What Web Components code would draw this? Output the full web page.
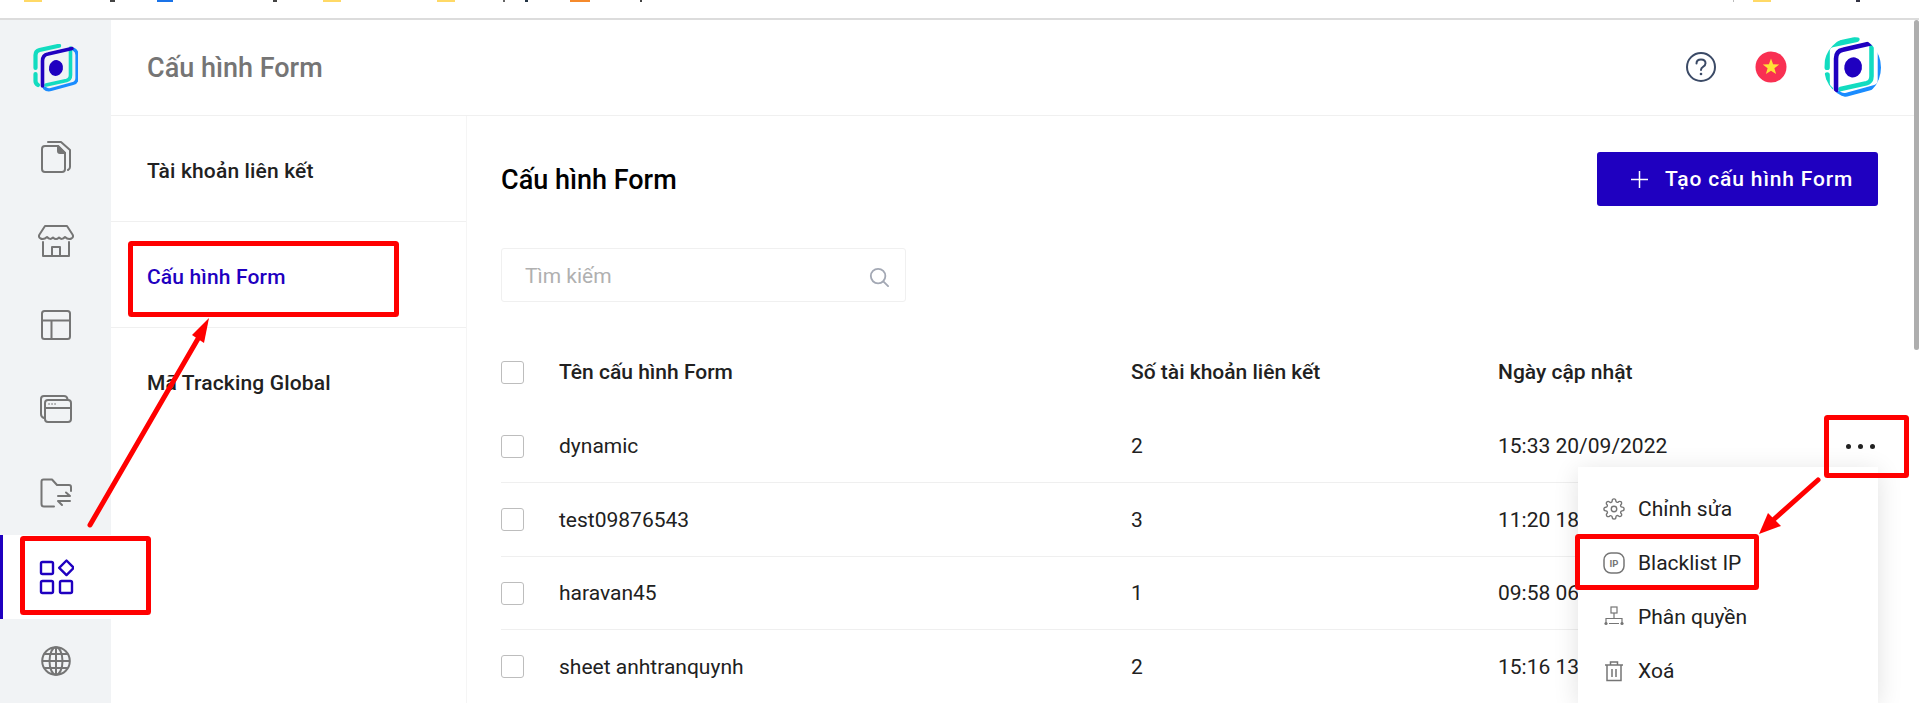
<!DOCTYPE html>
<html lang="vi">
<head>
<meta charset="utf-8">
<title>Cấu hình Form</title>
<style>
  html, body { margin: 0; padding: 0; background: #fff; }
  body { width: 1919px; height: 703px; overflow: hidden; position: relative; font-family: Roboto, "Liberation Sans", sans-serif; }
</style>
</head>
<body>
<browser-strip></browser-strip>
<app-shell>
  <app-rail slot="rail">
    <brand-logo size="45"></brand-logo>
    <rail-item icon="docs"></rail-item>
    <rail-item icon="store"></rail-item>
    <rail-item icon="layout"></rail-item>
    <rail-item icon="window"></rail-item>
    <rail-item icon="folder"></rail-item>
    <rail-item icon="apps" active></rail-item>
    <rail-item icon="globe"></rail-item>
  </app-rail>
  <page-header slot="header" title-text="Cấu hình Form"></page-header>
  <sub-nav slot="nav">
    <sub-nav-item>Tài khoản liên kết</sub-nav-item>
    <sub-nav-item active>Cấu hình Form</sub-nav-item>
    <sub-nav-item>Mã Tracking Global</sub-nav-item>
  </sub-nav>
  <form-panel slot="main">
    <form-row head name="Tên cấu hình Form" count="Số tài khoản liên kết" date="Ngày cập nhật"></form-row>
    <form-row name="dynamic" count="2" date="15:33 20/09/2022" more></form-row>
    <form-row name="test09876543" count="3" date="11:20 18/09/2022"></form-row>
    <form-row name="haravan45" count="1" date="09:58 06/09/2022"></form-row>
    <form-row name="sheet anhtranquynh" count="2" date="15:16 13/08/2022"></form-row>
    <action-menu slot="overlay">
      <menu-row icon="gear">Chỉnh sửa</menu-row>
      <menu-row icon="ip">Blacklist IP</menu-row>
      <menu-row icon="org">Phân quyền</menu-row>
      <menu-row icon="trash">Xoá</menu-row>
    </action-menu>
  </form-panel>
</app-shell>
<page-scrollbar></page-scrollbar>
<red-marks></red-marks>

<script>
const BLUE = '#1f00c0';
const GREY = '#757575';

const RAIL_ICONS = {
  docs: `<svg width="30" height="32" viewBox="0 0 30 32" fill="none" stroke="${GREY}" stroke-width="2" stroke-linejoin="round" stroke-linecap="round">
    <path d="M4 5H17L24 12V28Q24 31 21 31H4Q1 31 1 28V8Q1 5 4 5Z"/>
    <path d="M17 5V10Q17 12 19 12H24Z" fill="${GREY}"/>
    <path d="M7 1H20L29 9V26Q29 28 27 29"/></svg>`,
  store: `<svg width="36" height="32" viewBox="0 0 36 32" fill="none" stroke="${GREY}" stroke-width="2" stroke-linejoin="round" stroke-linecap="round">
    <path d="M7 1H29L34.500 9.500Q36 12 33.500 13.500Q30 15 27 12Q24 15.500 21 12.500Q18 15.500 15 12.500Q12 15.500 9 12Q6 15 2.500 13.500Q0 12 1.500 9.500Z"/>
    <path d="M5 17V31H31V17"/><path d="M14 31V22H22V31"/></svg>`,
  layout: `<svg width="30" height="30" viewBox="0 0 30 30" fill="none" stroke="${GREY}" stroke-width="2" stroke-linejoin="round">
    <rect x="1" y="1" width="28" height="28" rx="2.500"/><path d="M1 10.500H29M10.500 10.500V29"/></svg>`,
  window: `<svg width="32" height="28" viewBox="0 0 32 28" fill="none" stroke="${GREY}" stroke-width="2" stroke-linejoin="round" stroke-linecap="round">
    <path d="M4 23Q1 22 1 19V4Q1 1 4 1H24Q27 1 27.500 4"/>
    <rect x="5" y="5" width="26" height="22" rx="3"/><path d="M5 13H31"/>
    <path d="M9 9H9.100M12 9H12.100M15 9H15.100" stroke-width="1.600"/></svg>`,
  folder: `<svg width="32" height="30" viewBox="0 0 32 30" fill="none" stroke="${GREY}" stroke-width="2" stroke-linejoin="round" stroke-linecap="round">
    <path d="M14 28.500H4Q1.500 28.500 1.500 26V3.500Q1.500 1.500 3.500 1.500H12L17 7H29Q31 7 31 9V13"/>
    <path d="M18 18H30L26 14.500M30 23H18L22 27"/></svg>`,
  apps: `<svg width="36" height="36" viewBox="-2 0 36 36" fill="none" stroke="${BLUE}" stroke-width="2.400" stroke-linejoin="round">
    <rect x="1" y="3" width="12" height="12" rx="1.500"/><rect x="1" y="22" width="12" height="12" rx="1.500"/>
    <rect x="20" y="22" width="12" height="12" rx="1.500"/>
    <path d="M26.500 1.500L33.800 8.800L26.500 16.100L19.200 8.800Z"/></svg>`,
  globe: `<svg width="30" height="30" viewBox="0 0 30 30" fill="none" stroke="${GREY}" stroke-width="2">
    <circle cx="15" cy="15" r="13.800"/><ellipse cx="15" cy="15" rx="6.500" ry="13.800"/>
    <path d="M15 1V29M1.200 15H28.800M3.500 8H26.500M3.500 22H26.500"/></svg>`
};

const MENU_ICONS = {
  gear: `<svg width="22" height="22" viewBox="0 0 24 24" fill="none" stroke="${GREY}" stroke-width="1.500" stroke-linejoin="round">
    <circle cx="12" cy="12" r="3"/>
    <path d="M19.400 15a1.650 1.650 0 0 0 .33 1.820l.06.06a2 2 0 0 1 0 2.830 2 2 0 0 1-2.830 0l-.06-.06a1.650 1.650 0 0 0-1.820-.33 1.650 1.650 0 0 0-1 1.510V21a2 2 0 0 1-2 2 2 2 0 0 1-2-2v-.09A1.650 1.650 0 0 0 9 19.400a1.650 1.650 0 0 0-1.820.33l-.06.06a2 2 0 0 1-2.830 0 2 2 0 0 1 0-2.830l.06-.06a1.650 1.650 0 0 0 .33-1.820 1.650 1.650 0 0 0-1.510-1H3a2 2 0 0 1-2-2 2 2 0 0 1 2-2h.09A1.650 1.650 0 0 0 4.600 9a1.650 1.650 0 0 0-.33-1.820l-.06-.06a2 2 0 0 1 0-2.830 2 2 0 0 1 2.830 0l.06.06a1.650 1.650 0 0 0 1.820.33H9a1.650 1.650 0 0 0 1-1.510V3a2 2 0 0 1 2-2 2 2 0 0 1 2 2v.09a1.650 1.650 0 0 0 1 1.510 1.650 1.650 0 0 0 1.820-.33l.06-.06a2 2 0 0 1 2.830 0 2 2 0 0 1 0 2.830l-.06.06a1.650 1.650 0 0 0-.33 1.820V9a1.650 1.650 0 0 0 1.510 1H21a2 2 0 0 1 2 2 2 2 0 0 1-2 2h-.09a1.650 1.650 0 0 0-1.510 1z"/></svg>`,
  ip: `<svg width="22" height="22" viewBox="0 0 22 22" fill="none" stroke="${GREY}" stroke-width="1.500">
    <rect x="1" y="1" width="20" height="20" rx="7"/>
    <text x="11" y="14.500" text-anchor="middle" font-family="Roboto, sans-serif" font-size="9.500" font-weight="700" fill="${GREY}" stroke="none">IP</text></svg>`,
  org: `<svg width="22" height="22" viewBox="0 0 22 22" fill="none" stroke="${GREY}" stroke-width="1.200">
    <rect x="8" y="1" width="6" height="6"/><path d="M11 7V12.500M3 17V12.500H19V17M6 17.500H16"/>
    <circle cx="3" cy="17.500" r="1.600" fill="${GREY}" stroke="none"/><circle cx="19" cy="17.500" r="1.600" fill="${GREY}" stroke="none"/></svg>`,
  trash: `<svg width="22" height="22" viewBox="0 0 22 22" fill="none" stroke="${GREY}" stroke-width="1.500">
    <path d="M2 5H20M7.500 5V2H14.500V5M4 5V20.500H18V5M9 9V17M13 9V17"/></svg>`
};

function shadow(el, html) {
  el.attachShadow({ mode: 'open' }).innerHTML = html;
}

class BrowserStrip extends HTMLElement {
  constructor() {
    super();
    // leftovers of the bookmark bar that the crop cut off: [gap before, width, colour]
    const bits = [[24, 18, '#ffd966'], [68, 5, '#444'], [42, 16, '#1a73e8'], [100, 4, '#444'], [46, 18, '#ffd966'],
      [96, 18, '#ffd966'], [48, 2, '#666'], [20, 3, '#234'], [42, 20, '#f58a2c'], [50, 2, '#444'], [1091, 1, '#bbb'], [19, 18, '#ffd966'], [85, 4, '#334']];
    shadow(this, `<style>
      :host { display: block; height: 18px; border-bottom: 2px solid #dcdcdc; background: #fff; }
      .bits { display: flex; align-items: flex-start; }
      i { display: block; height: 2px; }
    </style><div class="bits">${bits.map(b => `<i style="margin-left:${b[0]}px;width:${b[1]}px;background:${b[2]}"></i>`).join('')}</div>`);
  }
}

class AppShell extends HTMLElement {
  constructor() {
    super();
    shadow(this, `<style>
      :host { display: flex; height: 683px; overflow: hidden; }
      .right { flex: 1; display: flex; flex-direction: column; min-width: 0; }
      .body { flex: 1; display: flex; min-height: 0; }
    </style>
    <slot name="rail"></slot>
    <div class="right">
      <slot name="header"></slot>
      <div class="body"><slot name="nav"></slot><slot name="main"></slot></div>
    </div>`);
  }
}

class AppRail extends HTMLElement {
  constructor() {
    super();
    shadow(this, `<style>
      :host { display: flex; flex-direction: column; width: 111px; flex: none; background: #f1f3f5; }
      .logo { height: 96px; display: flex; align-items: center; justify-content: center; }
      .items { display: flex; flex-direction: column; }
    </style><div class="logo"><slot name="logo"></slot></div><div class="items"><slot></slot></div>`);
  }
  connectedCallback() {
    const logo = this.querySelector('brand-logo');
    if (logo) logo.slot = 'logo';
  }
}

class BrandLogo extends HTMLElement {
  constructor() {
    super();
    const size = Number(this.getAttribute('size') || 45);
    shadow(this, `<style>
      :host { display: block; line-height: 0; }
      :host([round]) { border-radius: 50%; overflow: hidden; }
    </style>
    <svg width="${size}" height="${size * 48 / 45}" viewBox="0 0 45 48" fill="none" stroke-linecap="round">
      <path d="M41 5.500Q44 7 44 11V34Q44 38.500 40 39.500L18 45.500Q14 46.500 11.500 44" stroke="#1a8cff" stroke-width="3.200"/>
      <path d="M37.500 4V31Q37.500 35.500 33.500 36.500L13 41" stroke="#12dcc0" stroke-width="3.600"/>
      <path d="M2.500 24V11Q2.500 7 6.500 6L26 1.800" stroke="#12dcc0" stroke-width="4.200"/>
      <path d="M2.500 30V37Q2.500 39.500 5 41" stroke="#12dcc0" stroke-width="4.200"/>
      <path d="M9.500 42V17Q9.500 11 15 10L39 4.500" stroke="${BLUE}" stroke-width="3.600"/>
      <ellipse cx="23" cy="24" rx="7" ry="8" transform="rotate(12 23 24)" fill="${BLUE}"/>
    </svg>`);
  }
}

class RailItem extends HTMLElement {
  constructor() {
    super();
    shadow(this, `<style>
      :host { display: flex; align-items: center; justify-content: center; height: 84px; }
      :host([active]) { background: #fff; box-shadow: inset 3px 0 0 ${BLUE}; }
      svg { display: block; }
    </style>${RAIL_ICONS[this.getAttribute('icon')]}`);
  }
}

class PageHeader extends HTMLElement {
  constructor() {
    super();
    shadow(this, `<style>
      :host { display: flex; align-items: center; height: 95px; flex: none; padding: 0 38px 0 36px; border-bottom: 1px solid #f0f0f0; }
      h1 { flex: 1; margin: 0; font: 500 27px Roboto, sans-serif; color: ${GREY}; }
      .tools { display: flex; align-items: center; }
      svg { display: block; }
      .help { margin-right: 39px; }
      .flag { margin-right: 37px; }
    </style>
    <h1>${this.getAttribute('title-text')}</h1>
    <div class="tools">
      <svg class="help" width="30" height="30" viewBox="0 0 30 30" fill="none" stroke="#3b4a66" stroke-width="2" stroke-linecap="round">
        <circle cx="15" cy="15" r="14"/>
        <path d="M10.500 11.500Q10.500 7.500 15 7.500Q19.500 7.500 19.500 11.300Q19.500 13.500 17 14.800Q15 15.800 15 18"/>
        <circle cx="15" cy="22" r="1.300" fill="#3b4a66" stroke="none"/>
      </svg>
      <svg class="flag" width="32" height="32" viewBox="0 0 32 32">
        <circle cx="16" cy="16" r="15.500" fill="#f93052"/>
        <polygon points="16,7.500 18.100,13.200 24.200,13.400 19.400,17.200 21.100,23 16,19.700 10.900,23 12.600,17.200 7.800,13.400 13.900,13.200" fill="#ffe135"/>
      </svg>
      <brand-logo size="57" round></brand-logo>
    </div>`);
  }
}

class SubNav extends HTMLElement {
  constructor() {
    super();
    shadow(this, `<style>
      :host { display: flex; flex-direction: column; flex: none; width: 355px; border-right: 1px solid #f5f5f5; }
    </style><slot></slot>`);
  }
}

class SubNavItem extends HTMLElement {
  constructor() {
    super();
    shadow(this, `<style>
      :host { display: flex; align-items: center; height: 106px; padding: 4px 0 0 36px; border-bottom: 1px solid #f0f0f0;
        font: 500 21px Roboto, sans-serif; letter-spacing: .15px; color: #212121; box-sizing: border-box; }
      :host(:last-child) { border-bottom: 0; }
      :host([active]) { color: ${BLUE}; }
    </style><slot></slot>`);
  }
}

class FormPanel extends HTMLElement {
  constructor() {
    super();
    shadow(this, `<style>
      :host { display: block; flex: 1; min-width: 0; position: relative; padding: 36px 41px 0 34px; }
      .top { display: flex; align-items: center; justify-content: space-between; }
      h2 { margin: 0; padding-top: 2px; font: 500 27px Roboto, sans-serif; color: #000; }
      button { display: flex; align-items: center; width: 281px; height: 54px; padding: 0 0 0 34px; border: 0; border-radius: 3px;
        background: ${BLUE}; color: #fff; font: 500 21px Roboto, sans-serif; letter-spacing: .85px; box-sizing: border-box; }
      button svg { margin-right: 17px; flex: none; }
      .search { display: flex; align-items: center; justify-content: space-between; box-sizing: border-box; width: 405px; height: 54px;
        margin: 42px 0 33px; padding: 0 16px 0 23px; border: 1px solid #f0f0f0; border-radius: 3px; color: #b0b0b0; font: 400 21px Roboto, sans-serif; }
      .search span { padding-top: 2px; }
      .search svg { margin-top: 4px; }
      .rows { display: flex; flex-direction: column; }
    </style>
    <div class="top">
      <h2>Cấu hình Form</h2>
      <button><svg width="17" height="17" viewBox="0 0 17 17" stroke="#fff" stroke-width="1.500"><path d="M8.500 0V17M0 8.500H17"/></svg>Tạo cấu hình Form</button>
    </div>
    <div class="search"><span>Tìm kiếm</span>
      <svg width="20" height="20" viewBox="0 0 22 22" fill="none" stroke="#a3a8b4" stroke-width="2" stroke-linecap="round"><circle cx="10" cy="10" r="8"/><path d="M16 16L21 21"/></svg>
    </div>
    <div class="rows"><slot></slot></div>
    <slot name="overlay"></slot>`);
  }
}

class FormRow extends HTMLElement {
  constructor() {
    super();
    const more = this.hasAttribute('more');
    shadow(this, `<style>
      :host { display: grid; grid-template-columns: 58px 572px 367px 1fr 36px; align-items: center; height: 73.500px; padding-top: 1px;
        border-bottom: 1px solid #efefef; box-sizing: border-box; font: 400 21px Roboto, sans-serif; color: #212121; }
      :host([head]) { height: 74.500px; padding-top: 0; border-bottom: 0; font-weight: 500; }
      .box { width: 21px; height: 21px; border: 1px solid #bdbdbd; border-radius: 3px; background: #fff; }
      .more { display: flex; gap: 7px; justify-content: center; }
      .more i { width: 5px; height: 5px; border-radius: 50%; background: #222; }
    </style>
    <div class="box"></div>
    <div>${this.getAttribute('name')}</div>
    <div>${this.getAttribute('count')}</div>
    <div>${this.getAttribute('date')}</div>
    <div class="more">${more ? '<i></i><i></i><i></i>' : ''}</div>`);
  }
}

class ActionMenu extends HTMLElement {
  constructor() {
    super();
    shadow(this, `<style>
      :host { position: absolute; top: 351px; right: 41px; bottom: 0; width: 300px; box-sizing: border-box; padding-top: 15px;
        background: #fff; box-shadow: 0 4px 24px rgba(0,0,0,.12); }
    </style><slot></slot>`);
  }
}

class MenuRow extends HTMLElement {
  constructor() {
    super();
    shadow(this, `<style>
      :host { display: flex; align-items: center; height: 54px; padding-left: 25px; font: 400 21px Roboto, sans-serif; color: #212121; }
      svg { display: block; margin-right: 13px; flex: none; }
    </style>${MENU_ICONS[this.getAttribute('icon')]}<slot></slot>`);
  }
}

class PageScrollbar extends HTMLElement {
  constructor() {
    super();
    shadow(this, `<style>
      :host { position: absolute; top: 20px; right: 0; width: 5px; height: 330px; background: #aeaeae; border-radius: 3px; }
    </style>`);
  }
}

class RedMarks extends HTMLElement {
  constructor() {
    super();
    const box = (x0, y0, x1, y1) => `<rect x="${x0 + 2.5}" y="${y0 + 2.5}" width="${x1 - x0 - 5}" height="${y1 - y0 - 5}" rx="1"/>`;
    shadow(this, `<style>
      :host { position: absolute; left: 0; top: 0; width: 1919px; height: 703px; pointer-events: none; }
      svg { display: block; }
    </style>
    <svg width="1919" height="703" viewBox="0 0 1919 703">
      <g fill="none" stroke="#ff0000" stroke-width="5">
        ${box(128, 241, 399, 317)}
        ${box(20, 536, 151, 615)}
        ${box(1824, 415, 1909, 478)}
        ${box(1575, 534, 1759, 590)}
      </g>
      <g stroke="#ff0000" stroke-width="5" stroke-linecap="round">
        <path d="M90 525L199 337"/>
        <path d="M1818 480L1772 521"/>
      </g>
      <g fill="#ff0000">
        <polygon points="209,318 192,335 204,343"/>
        <polygon points="1759,534 1768,513 1781,526"/>
      </g>
    </svg>`);
  }
}

customElements.define('browser-strip', BrowserStrip);
customElements.define('brand-logo', BrandLogo);
customElements.define('app-shell', AppShell);
customElements.define('app-rail', AppRail);
customElements.define('rail-item', RailItem);
customElements.define('page-header', PageHeader);
customElements.define('sub-nav', SubNav);
customElements.define('sub-nav-item', SubNavItem);
customElements.define('form-panel', FormPanel);
customElements.define('form-row', FormRow);
customElements.define('action-menu', ActionMenu);
customElements.define('menu-row', MenuRow);
customElements.define('page-scrollbar', PageScrollbar);
customElements.define('red-marks', RedMarks);
</script>
</body>
</html>
